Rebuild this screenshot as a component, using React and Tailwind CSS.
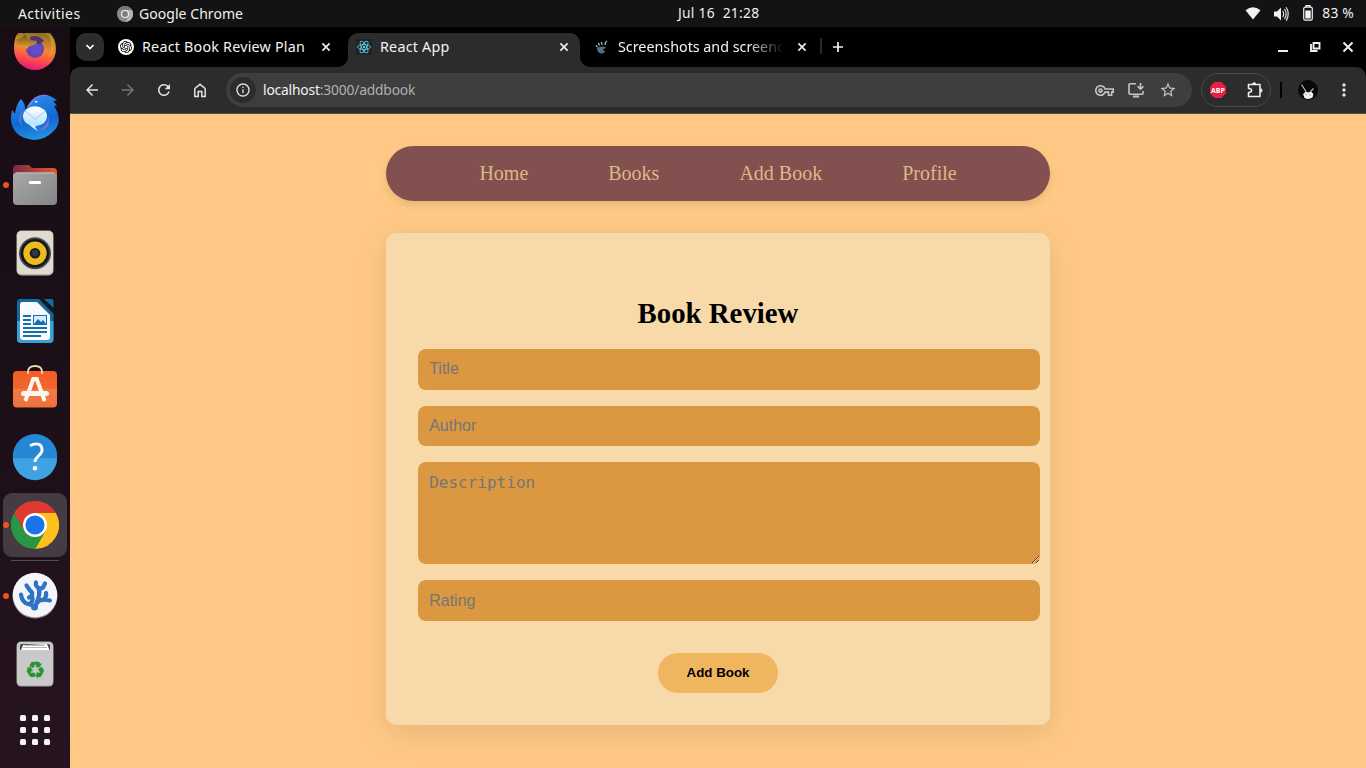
import React from "react";
import { MdArrowBack, MdArrowForward, MdRefresh, MdInfoOutline, MdStarBorder, MdMoreVert, MdOutlineVpnKey } from "react-icons/md";
import { SiOpenai } from "react-icons/si";

function Cross({ className = "" }) {
  return (
    <svg viewBox="0 0 12 12" className={"h-3 w-3 shrink-0 " + className}>
      <path d="M2.400 2.400 9.600 9.600M9.600 2.400 2.400 9.600" stroke="#f2f2f2" strokeWidth="1.600" fill="none" />
    </svg>
  );
}

function TopBar() {
  return (
    <header className="flex h-[27px] shrink-0 items-center bg-[#131313] text-[14px] text-[#f0f0f0]">
      <span className="ml-[18px] w-[99px] tracking-[0.42px]">Activities</span>
      <svg viewBox="0 0 16 16" className="h-4 w-4">
        <circle cx="8" cy="8" r="8" fill="#8b8b8b" />
        <path d="M8 4h7A8 8 0 0 1 8.500 16L12 9z" fill="#b5b5b5" />
        <path d="M1 4a8 8 0 0 1 14 0H8z" fill="#777" />
        <circle cx="8" cy="8" r="4" fill="#f3f3f3" />
        <circle cx="8" cy="8" r="2.900" fill="#7c7c7c" />
      </svg>
      <span className="ml-[6px] w-[539px] tracking-[0.05px]">Google Chrome</span>
      <span className="whitespace-pre text-[13.800px] tracking-[0.28px]">Jul 16  21:28</span>
      <div className="ml-auto flex items-center pr-[12px]">
        <svg viewBox="0 0 16 13" className="h-[13px] w-4">
          <path d="M.5 3.200Q8-2.800 15.500 3.200L8 12.500z" fill="#f2f2f2" />
        </svg>
        <svg viewBox="0 0 16 16" className="ml-[12px] h-4 w-4">
          <path d="M1 5.500h3L8 1.500v13l-4-4H1z" fill="#f2f2f2" />
          <path d="M9.700 5q2 3 0 6M11.500 3q3.300 5 0 10M13.200 1.200q4 6.800 0 13.600" fill="none" stroke="#ddd" strokeWidth="1.200" />
        </svg>
        <svg viewBox="0 0 10 16" className="ml-[14px] -mt-[2px] h-4 w-[10px]">
          <path d="M3 2V.7h4V2" fill="none" stroke="#f2f2f2" strokeWidth="1.300" />
          <rect x=".7" y="2.200" width="8.600" height="13" rx="1.600" fill="none" stroke="#f2f2f2" strokeWidth="1.200" />
          <rect x="2.300" y="5.500" width="5.400" height="8" fill="#f2f2f2" />
        </svg>
        <span className="ml-[9px] text-[13.800px] tracking-[0.2px]">83 %</span>
      </div>
    </header>
  );
}

function DockItem({ children, running, active }) {
  return (
    <div className="relative flex h-[68px] w-[70px] shrink-0 items-center justify-center">
      <div className={active ? "flex h-16 w-16 items-center justify-center rounded-[9px] bg-[#453c43]" : "flex h-16 w-16 items-center justify-center"}>
        <svg viewBox="0 0 48 48" className="h-12 w-12">{children}</svg>
      </div>
      {running && <span className="absolute left-[3px] top-[31px] h-[6px] w-[6px] rounded-full bg-[#e95420]" />}
    </div>
  );
}

function Dock() {
  return (
    <aside className="w-[70px] shrink-0 overflow-hidden bg-linear-to-b from-[#190d15] via-[#1b0f18] to-[#271420]">
      <div className="-mt-[12px] flex flex-col">
        <DockItem>
          <defs>
            <linearGradient id="fx" x1="0.6" y1="0" x2="0.4" y2="1">
              <stop offset="0.15" stopColor="#8a7425" /><stop offset="0.5" stopColor="#ef8a32" /><stop offset="0.72" stopColor="#ff5548" /><stop offset="1" stopColor="#e3157e" />
            </linearGradient>
            <linearGradient id="fy" x1="0" y1="0" x2="0" y2="1"><stop offset="0.2" stopColor="#7c6420" /><stop offset="1" stopColor="#f4a42b" /></linearGradient>
            <clipPath id="fc"><rect x="0" y="8" width="48" height="40" /></clipPath>
          </defs>
          <g clipPath="url(#fc)">
            <path d="M5 11q2-2 3-5 3 0 5 3L16 3q14-3 22 4 7 6 7 17a21 21 0 0 1-42 0q0-8 2-13z" fill="url(#fx)" />
            <path d="M33 7q7 4 7 12 2 9-5 15 11-6 8-19-3-6-10-8z" fill="#e3b02d" opacity=".5" />
            <circle cx="24" cy="24" r="9" fill="#6b43b5" />
            <path d="M19 12q8-3 14 4l-5 3-8-2z" fill="#4f3078" />
            <circle cx="25" cy="24" r="5.500" fill="#5a55ce" opacity=".7" />
            <path d="M6 14q5 0 8-5 2 5 6 6l6 1q0 3-4 4-5 1-6 4-4-4-11-4z" fill="url(#fy)" />
          </g>
        </DockItem>
        <DockItem>
          <defs>
            <linearGradient id="tb" x1="0.3" y1="0" x2="0.5" y2="1"><stop stopColor="#2b8cf0" /><stop offset=".6" stopColor="#1368d0" /><stop offset="1" stopColor="#2193e6" /></linearGradient>
            <linearGradient id="mail" x1="0" y1="0" x2="0" y2="1"><stop stopColor="#ffffff" /><stop offset="1" stopColor="#aee2ff" /></linearGradient>
          </defs>
          <g transform="translate(0 .8)">
            <path d="M10 5q5 6 4 12l3-6Q24 0 34 1q7 1 12 6l-4 0 4 5-3 0q10 16-1 26-9 9-21 8Q2 43 0 27q0-7 1-11l3 4Q5 11 10 5z" fill="url(#tb)" />
            <path d="M16 14Q23 1 34 1l4 .6q-11 0-15 5-2 4-7 7.400z" fill="#a176dc" />
            <path d="M13 16q-6 9-1 17-8-8 1-17z" fill="#6b75dd" />
            <path d="M37 22q1 11-11 15 15-1 11-15z" fill="#7d72de" />
            <ellipse cx="24" cy="22.500" rx="12" ry="10" fill="url(#mail)" />
            <path d="M17 29q5 7 11 8-4-2-4-6z" fill="#c4ecff" />
            <path d="m14 17 10 8.500L35 17" fill="none" stroke="#a5c8e8" strokeWidth="1" />
            <path d="m23.500 7 4 1-3 1z" fill="#fff" />
          </g>
        </DockItem>
        <DockItem running>
          <defs>
            <linearGradient id="f1"><stop stopColor="#7a2849" /><stop offset="1" stopColor="#e85a25" /></linearGradient>
            <linearGradient id="f2" x1="0" y1="0" x2="1" y2="1"><stop stopColor="#a8a8a8" /><stop offset="1" stopColor="#858585" /></linearGradient>
          </defs>
          <path d="M2 8q0-4 4-4h12l3 3h21q4 0 4 4v15H2z" fill="url(#f1)" />
          <rect x="2" y="11.500" width="44" height="32.500" rx="4" fill="url(#f2)" />
          <path d="M5 12h38" stroke="#c2c2c2" />
          <rect x="18" y="20" width="12" height="3" rx="1" fill="#fff" />
        </DockItem>
        <DockItem>
          <rect x="5.500" y="1.500" width="37" height="45" rx="5" fill="#b9b4a9" />
          <rect x="6" y="2" width="36" height="43" rx="4.500" fill="#dfdbce" />
          <circle cx="24" cy="24.200" r="16" fill="#4a4a52" /><circle cx="24" cy="24.200" r="14.300" fill="#14161c" />
          <circle cx="24" cy="24.200" r="11.700" fill="#ebbc1c" />
          <circle cx="24" cy="24.200" r="5.300" fill="#1b1c20" />
          <circle cx="24" cy="24.200" r="3.200" fill="#313940" />
        </DockItem>
        <DockItem>
          <path d="M9 2h24l9.500 12v29q0 3-4 3H10q-4 0-4-4V6q0-4 3-4z" fill="#1269a2" />
          <path d="M6 24h36.500v18q0 4-4 4H10q-4 0-4-4z" fill="#3a9fd5" />
          <path d="M28 2h5l9.500 10v5z" fill="#15151b" />
          <path d="M33 2h7q2.500 0 2.500 2v7z" fill="#126da4" />
          <path d="M11 5h15l13 13v22q0 3-3 3H12q-3 0-3-3V8q0-3 2-3z" fill="#f8fafb" />
          <path d="M12 19h8M12 23h8M12 27h8M12 31h24M12 35h24M12 39h18" stroke="#1470a9" strokeWidth="2" />
          <rect x="22.500" y="18.500" width="13" height="9" fill="#d4edff" stroke="#1470a9" />
          <path d="m23 27 4-5 3 3 2-2 3 4z" fill="#1470a9" />
        </DockItem>
        <DockItem>
          <defs><linearGradient id="sw" x1="0" y1="0" x2="0" y2="1"><stop stopColor="#f45b25" /><stop offset=".49" stopColor="#ef682f" /><stop offset=".5" stopColor="#f27a46" /><stop offset="1" stopColor="#ef713b" /></linearGradient></defs>
          <rect x="2" y="6" width="44" height="36.500" rx="4" fill="url(#sw)" />
          <path d="M17 9V7q0-6 7-6t7 6v2" fill="none" stroke="#f0d6b1" strokeWidth="1.800" />
          <path d="m14.300 36 8-22h3.400l8 22" fill="none" stroke="#fff6ed" strokeWidth="4" />
          <rect x="10" y="26" width="28" height="5" rx="2.500" fill="#fff6ed" />
        </DockItem>
        <DockItem>
          <g transform="translate(0 -.8)">
            <circle cx="24" cy="24" r="22.200" fill="#2588d7" />
            <path d="M2 26a22 22 0 0 0 44 0z" fill="#3fa2e1" />
            <path d="M19 13.500q3-1.800 6-1.800 6 0 6 6 0 3-3.500 6-3.500 3-3.500 6" fill="none" stroke="#fff" strokeWidth="2.800" />
            <circle cx="24" cy="36" r="2.300" fill="#fff" />
          </g>
        </DockItem>
        <DockItem running active>
          <path d="M24 12h20.800A24 24 0 0 1 24 48l10.400-18z" fill="#fcc21b" />
          <path d="M34.400 30 24 48A24 24 0 0 1 3.200 12l10.400 18z" fill="#289643" />
          <path d="M3.200 12a24 24 0 0 1 41.600 0H24L13.600 30z" fill="#de3b30" />
          <circle cx="24" cy="24" r="12" fill="#fff" /><circle cx="24" cy="24" r="9.600" fill="#1b73e8" />
        </DockItem>
        <div className="mx-auto mt-px mb-px h-px w-12 bg-[#514c50]" />
        <DockItem running>
          <circle cx="24" cy="24" r="22.500" fill="#96919a" />
          <circle cx="24" cy="23" r="22.200" fill="#f4f5f8" />
          <g fill="none" stroke="#3073c5" strokeLinecap="round" strokeLinejoin="round" strokeWidth="4.200">
            <path d="M10 22.500q1 8 7 9.500 5 1 6.500 4M15.500 13.500l3.500 5q3 2 2 5l-3 2M18 32q5-2 3-8M25 10.500q-1 3 2 5 2 3 1 8-1 5-4 11M34 11.500l-2 4-4 2M35 21q1 4-3 7M39 28.500l-7-1q-6 1-7.500 7" />
          </g>
          <circle cx="23.500" cy="35" r="3.500" fill="#3073c5" />
        </DockItem>
        <DockItem>
          <rect x="5.500" y="1.500" width="37" height="45" rx="4.500" fill="#a4a4a4" />
          <rect x="6" y="2" width="36" height="43.500" rx="4.500" fill="#c9c9c9" />
          <path d="M9 10V6q0-2 2-2h26q2 0 2 2v4z" fill="#454545" />
          <path d="m10 10 2-5 24-1 2.500 6z" fill="#fff" /><path d="M12 7.500h24M14 5.500h20" stroke="#999" strokeWidth=".7" />
          <text x="24" y="37.500" textAnchor="middle" fontFamily="DejaVu Sans" fontSize="23" fill="#27922e" stroke="#27922e" strokeWidth=".4">♻</text>
        </DockItem>
        <div className="grid grid-cols-3 gap-[6px] self-center pt-[17px]">
          {[0, 1, 2, 3, 4, 5, 6, 7, 8].map((n) => <span key={n} className="h-[6px] w-[6px] rounded-[1.5px] bg-[#f5f5f5]" />)}
        </div>
      </div>
    </aside>
  );
}

function TabCurve({ flip }) {
  return (
    <svg viewBox="0 0 10 10" className={flip ? "h-[10px] w-[10px] shrink-0 -scale-x-100 self-end" : "h-[10px] w-[10px] shrink-0 self-end"}>
      <path d="M10 0v10H0A10 10 0 0 0 10 0z" fill="#2c2c2c" />
    </svg>
  );
}

function TabStrip() {
  return (
    <div className="flex h-10 items-end bg-black pl-[6px] text-[14.300px] tracking-[0.22px] text-[#f3f3f3]">
      <button className="mb-[6px] flex h-7 w-7 items-center justify-center rounded-[10px] bg-[#2c2c2c]">
        <svg viewBox="0 0 10 10" className="h-[10px] w-[10px]"><path d="m1.500 3 3.500 3.500L8.500 3" fill="none" stroke="#fff" strokeWidth="1.700" /></svg>
      </button>
      <div className="mb-[6px] flex h-7 w-[234px] items-center pl-[14px] pr-[6px]">
        <span className="flex h-4 w-4 items-center justify-center rounded-full bg-white text-black"><SiOpenai size={12} /></span>
        <span className="ml-2 flex-1 whitespace-nowrap leading-5">React Book Review Plan</span>
        <Cross />
      </div>
      <TabCurve />
      <div className="flex h-[34px] w-[232px] items-center rounded-t-[10px] bg-[#2c2c2c] pb-[6px] pl-2 pr-[10px]">
        <svg viewBox="0 0 16 16" className="h-4 w-4">
          <rect width="16" height="16" rx="1" fill="#202224" />
          <g fill="none" stroke="#58c4dc" strokeWidth=".9">
            <ellipse cx="8" cy="8" rx="6.500" ry="2.500" />
            <ellipse cx="8" cy="8" rx="6.500" ry="2.500" transform="rotate(60 8 8)" />
            <ellipse cx="8" cy="8" rx="6.500" ry="2.500" transform="rotate(120 8 8)" />
          </g>
          <circle cx="8" cy="8" r="1.300" fill="#58c4dc" />
        </svg>
        <span className="ml-2 flex-1 leading-5">React App</span>
        <Cross />
      </div>
      <TabCurve flip />
      <div className="mb-[6px] flex h-7 w-[230px] items-center pl-[4px] pr-[12px]">
        <svg viewBox="0 0 16 16" className="h-4 w-4">
          <path d="M3 9q2-2 6-1.500 4 .5 2 2-2 0-2 2 2-.5 2 1-1 2.500-4 2-4-1-4-5.500z" fill="#527083" />
          <path d="M2 6.500 3.500 8M4.500 4 5.500 6.500M7.500 3 8 6M13 2q-2 1-2 4" stroke="#a8b6bf" strokeWidth="1.300" />
        </svg>
        <span className="ml-2 mr-[12px] w-[166px] overflow-hidden whitespace-nowrap leading-5 tracking-normal mask-r-from-78% mask-r-to-100%">Screenshots and screencasts</span>
        <Cross />
      </div>
      <span className="mb-[13px] h-4 w-[2px] bg-[#292929]" />
      <svg viewBox="0 0 12 12" className="mb-[14px] ml-[10px] h-3 w-3"><path d="M6 1v10M1 6h10" stroke="#f2f2f2" strokeWidth="1.700" /></svg>
      <div className="mb-[14px] ml-auto mr-[12px] flex items-center gap-[21px]">
        <svg viewBox="0 0 12 12" className="h-3 w-3"><path d="M2 10h10" stroke="#eee" strokeWidth="2" /></svg>
        <svg viewBox="0 0 12 12" className="h-3 w-3"><path d="M4.500 2h6v5.500h-6zM2 3v7h6.500" fill="none" stroke="#eee" strokeWidth="1.900" /></svg>
        <svg viewBox="0 0 12 12" className="h-3 w-3"><path d="m1.500 1.500 9 9m0-9-9 9" stroke="#eee" strokeWidth="2" /></svg>
      </div>
    </div>
  );
}

function Toolbar() {
  const slot = "flex w-9 items-center justify-center";
  return (
    <div className="bg-black">
      <div className="flex h-[47px] items-center rounded-t-[10px] border-b border-[#515151] bg-[#2c2c2c] pl-1 text-[#e2e2e2]">
        <span className={slot}><MdArrowBack size={18} /></span>
        <span className="flex w-9 items-center justify-center text-[#747474]"><MdArrowForward size={18} /></span>
        <span className={slot}><MdRefresh size={18} /></span>
        <span className={slot}>
          <svg viewBox="0 0 16 16" className="h-4 w-4"><path d="M2.800 14.500v-8L8 2.300l5.200 4.200v8H9.800v-5H6.200v5z" fill="none" stroke="#e2e2e2" strokeWidth="1.500" /></svg>
        </span>
        <div className="ml-2 flex h-[34px] w-[966px] items-center rounded-full bg-[#3e3e3e] pl-[4px] pr-2">
          <span className="flex h-[26px] w-[26px] items-center justify-center rounded-full bg-[#2c2c2c]"><MdInfoOutline size={16} /></span>
          <span className="ml-[7px] text-[13.800px] tracking-[-0.17px] text-[#b0b0b0]"><span className="text-[#f3f3f3]">localhost</span>:3000/addbook</span>
          <div className="ml-auto flex items-center text-[#c6c6c6]">
            <span className="flex w-8 justify-center"><MdOutlineVpnKey size={19} /></span>
            <span className="flex w-8 justify-center">
              <svg viewBox="0 0 18 18" className="h-[18px] w-[18px]" fill="none" stroke="#c6c6c6" strokeWidth="1.600">
                <path d="M9 2.800H3q-1 0-1 1v8.400q0 1 1 1h12q1 0 1-1V10" /><path d="M6 15.500h6" strokeWidth="2" /><path d="M13.500 2v6m-3-2.800 3 3 3-3" />
              </svg>
            </span>
            <span className="flex w-8 justify-center"><MdStarBorder size={18} /></span>
          </div>
        </div>
        <div className="ml-[9px] flex h-[34px] w-[70px] items-center justify-between rounded-full border border-[#484848] pl-[8px] pr-[6px]">
          <svg viewBox="0 0 16 16" className="h-4 w-4">
            <path d="M4.700 0h6.600L16 4.700v6.600L11.300 16H4.700L0 11.300V4.700z" fill="#ed1e43" />
            <text x="8" y="10.600" textAnchor="middle" fontFamily="Open Sans" fontWeight="700" fontSize="7" fill="#fff">ABP</text>
          </svg>
          <svg viewBox="0 0 18 18" className="h-[18px] w-[18px]">
            <path d="M2.500 3.500h11.500v12H2.500v-4q3 0 3-2t-3-2z" fill="none" stroke="#ededed" strokeWidth="1.600" strokeLinejoin="round" />
            <path d="M6.200 3.200a2 2 0 0 1 4 0zM14.300 7.200a2.200 2.200 0 0 1 0 4.400z" fill="#ededed" />
          </svg>
        </div>
        <span className="ml-[9px] h-4 w-[2px] bg-black" />
        <svg viewBox="0 0 20 20" className="ml-[16px] h-5 w-5">
          <circle cx="10" cy="10" r="10" fill="#080808" />
          <path d="m3.500 4.500 4.500 7M15.500 8.500l-3 3" stroke="#c4c4c4" strokeWidth="1.100" />
          <path d="m5 14 3-2.500 2 1 3-1 2.500 2.500-1 3.500q-4 2.500-8 .5z" fill="#f0f0f0" />
          <path d="m7 14 2 1m2-1 2 2" stroke="#888" strokeWidth=".6" />
        </svg>
        <span className="ml-[16px] flex w-5 justify-center"><MdMoreVert size={20} /></span>
      </div>
    </div>
  );
}

function BookPage() {
  const field = "block h-[40.4px] w-[622.4px] rounded-[8px] bg-[#db9841] px-[11.2px] font-['Liberation_Sans',sans-serif] text-base placeholder:text-[#757575]";
  return (
    <main className="flex flex-1 flex-col items-center bg-[#ffc985] pt-8">
      <nav className="flex h-[55px] w-[664px] items-center justify-center gap-[80px] rounded-full bg-[#82504e] pb-[2px] font-['Liberation_Serif',serif] text-[20px] text-[#deb887] shadow-[0_4px_8px_rgba(0,0,0,0.1)]">
        <a>Home</a><a>Books</a><a>Add Book</a><a>Profile</a>
      </nav>
      <form className="mt-8 h-[492px] w-[664px] rounded-[10px] bg-[#f8d9aa] px-8 pt-[64px] shadow-[0_8px_32px_rgba(0,0,0,0.1)]">
        <h2 className="h-[52.2px] text-center font-['Liberation_Serif',serif] text-[28.8px] leading-[33px] font-bold text-black">Book Review</h2>
        <div className="flex flex-col gap-4">
          <input className={field} placeholder="Title" />
          <input className={field} placeholder="Author" />
          <textarea className="block h-[102.4px] w-[622.4px] resize rounded-[8px] bg-[#db9841] p-[11.2px] font-['DejaVu_Sans_Mono',monospace] text-base leading-[19px] placeholder:text-[#757575]" placeholder="Description" />
          <input className={field} placeholder="Rating" />
        </div>
        <button type="button" className="mx-auto mt-8 block h-10 w-[120px] rounded-full bg-[#f0b55f] font-['Liberation_Sans',sans-serif] text-[13.333px] font-bold text-black">Add Book</button>
      </form>
    </main>
  );
}

export default function App() {
  return (
    <div className="flex h-screen w-screen flex-col overflow-hidden font-['Noto_Sans',sans-serif]">
      <TopBar />
      <div className="flex min-h-0 flex-1">
        <Dock />
        <section className="flex min-w-0 flex-1 flex-col">
          <TabStrip />
          <Toolbar />
          <BookPage />
        </section>
      </div>
    </div>
  );
}
